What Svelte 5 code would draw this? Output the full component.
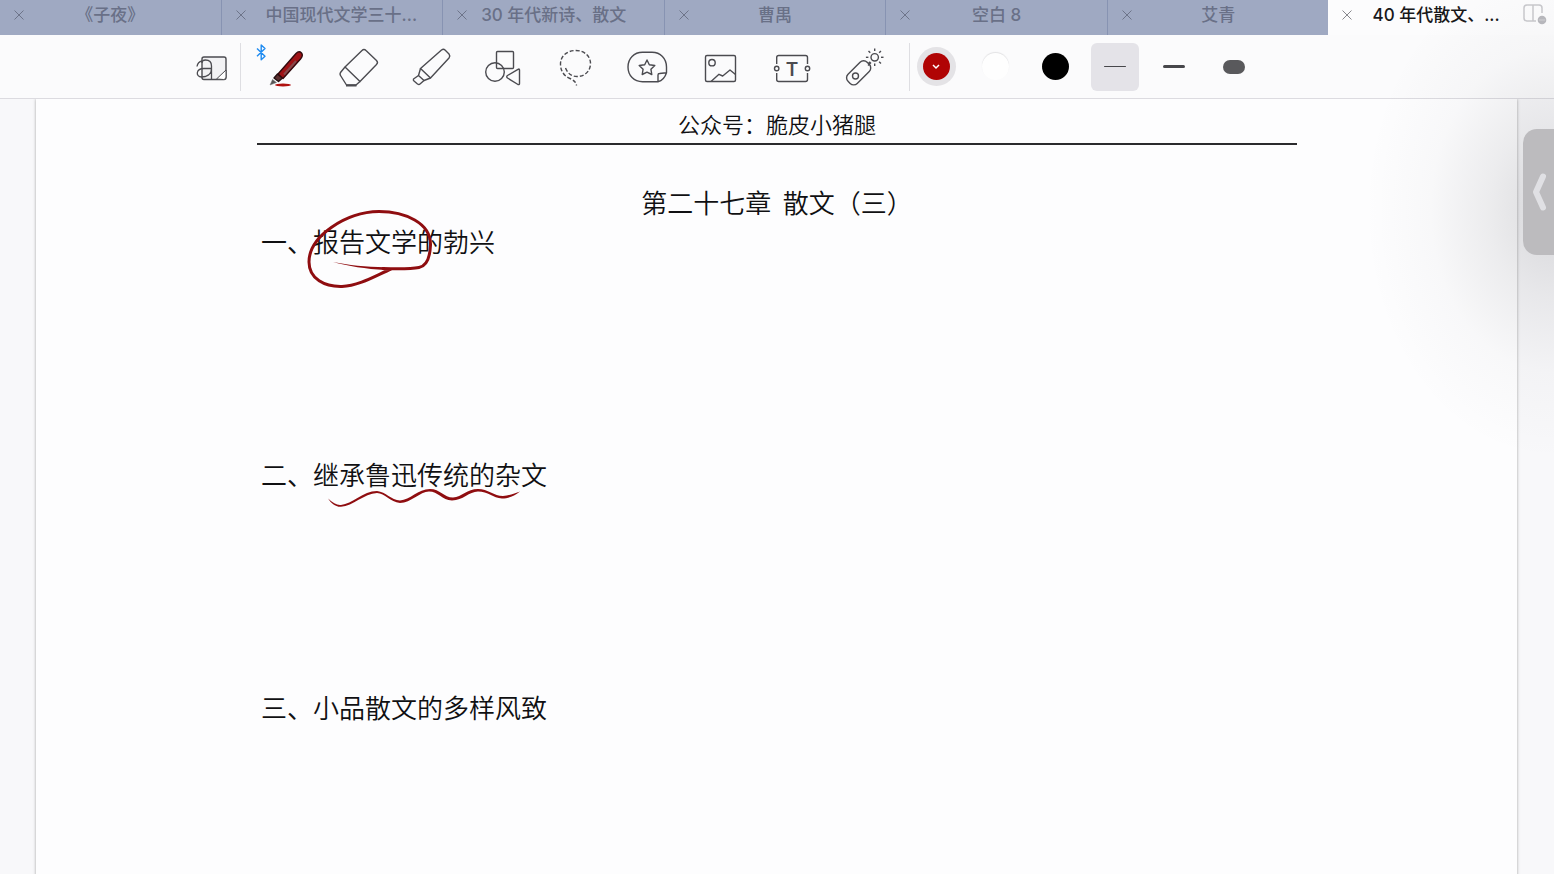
<script lang="ts">
  const tabs = [
    { title: "《子夜》" },
    { title: "中国现代文学三十...", clipped: true },
    { title: "30 年代新诗、散文" },
    { title: "曹禺" },
    { title: "空白 8" },
    { title: "艾青" },
    { title: "40 年代散文、...", clipped: true },
  ];
  let activeTab = $state(6);

  const tools = [
    "pen",
    "eraser",
    "highlighter",
    "shapes",
    "lasso",
    "sticker",
    "image",
    "text",
    "laser",
  ];
  let tool = $state("pen");

  const colors = ["red", "white", "black"];
  let color = $state("red");

  const widths = ["thin", "medium", "thick"];
  let width = $state("thin");

  const rays = [0, 45, 90, 135, 180, 225, 270, 315];

  const sections = [
    { title: "一、报告文学的勃兴", ink: "loop" },
    { title: "二、继承鲁迅传统的杂文", ink: "wave" },
    { title: "三、小品散文的多样风致", ink: "" },
  ];
</script>

<div class="app">
  <nav class="tabs">
    {#each tabs as tab, i}
      <div class="tab" class:active={i === activeTab}>
        <button class="close" type="button" aria-label="关闭">
          <svg width="10" height="10" viewBox="0 0 10 10">
            <path d="M.5 .5 9.5 9.5M9.5 .5 .5 9.5" />
          </svg>
        </button>
        <button
          class="title"
          class:clipped={tab.clipped}
          type="button"
          onclick={() => (activeTab = i)}
        >
          {tab.title}
        </button>
        {#if i === tabs.length - 1}
          <button class="split" type="button" aria-label="分屏">
            <svg width="24" height="20" viewBox="0 0 24 20">
              <path d="M13 16H4Q1 16 1 13V3Q1 0 4 0H16Q19 0 19 3V8M10 0V16" />
              <circle cx="19" cy="15" r="4.300" />
              <path class="dots" d="M16.500 15h5" />
            </svg>
          </button>
        {/if}
      </div>
    {/each}
  </nav>

  <div class="toolbar">
    <button class="tool first" type="button" aria-label="手写模式">
      <svg class="icon" viewBox="0 0 48 48">
        <rect x="14" y="14" width="24" height="22.500" rx="2" fill="#f2f2f4" />
        <path d="M28.500 36 38 27V34Q38 36.500 35.500 36.500Z" fill="#fff" stroke-width="1" />
        <path
          d="M14 20C14 17.500 15.500 17 17.500 17C21.500 17 23.500 19 23.500 23V36.500M23.500 25.500H16C7.500 25.500 7.500 34 13.500 34C18 34 23.500 32 23.500 25.500M9 23.500C9.500 20.500 11 18.500 14 18"
          stroke-width="1.300"
        />
      </svg>
    </button>
    <span class="divider"></span>

    <div class="tools">
      {#each tools as name}
        <button
          class="tool"
          type="button"
          aria-label={name}
          aria-pressed={tool === name}
          onclick={() => (tool = name)}
        >
          <svg class="icon" viewBox="0 0 48 48">
            {#if name === "pen"}
              <path d="M-5 5.500 3 13.300-.8 16.800V2L3 5.500-5 13.300" stroke="#1f8bf0" />
              <ellipse cx="21" cy="42" rx="8" ry="1.500" fill="#b01210" stroke="none" />
              <path d="M8 42 10.500 36.500 14.500 39.500Z" fill="#555" stroke="#777" stroke-width=".5" />
              <path d="M12 35 15.500 31 20.500 35 16.500 38.500Z" fill="#5c3030" stroke="#241012" />
              <path
                d="M16 31 34 10.500Q37 7.500 39.500 10Q41.500 12.500 38.500 16L21 35.500Z"
                fill="#9f1216"
                stroke="#30090c"
              />
              <path d="M22 31.500 34 18" stroke="#854a4c" stroke-width="2" />
            {:else if name === "eraser"}
              <path
                d="M11 24 28 7.500Q30 5.500 32 7.500L42.500 17.500Q44.500 19.500 42.500 21.500L26 38.500Z"
              />
              <path d="M11 24 6.500 29.500Q5.500 31 6.500 32.500L12.500 42H22L26 38.500" />
              <path d="M12 42.500H22.500" stroke-width="2" />
            {:else if name === "highlighter"}
              <path d="M13.500 25.500 34.500 7Q36.500 5.500 38 7L42 11Q43.500 13 42 15L23.500 35Z" />
              <path d="M13.500 25.500 11.500 32.500 17 37.500 23.500 35" />
              <path d="M11.500 32.500 6.500 36Q6 37 7 38L10.500 41Q12 42 13 41L17 37.500" />
            {:else if name === "shapes"}
              <rect x="17.500" y="8.500" width="17" height="17" rx="1" />
              <circle cx="16" cy="29" r="9.300" />
              <path d="M28.500 32.500 39 26.300Q40.500 25.500 40.500 27V40.500Q40.500 42 39 41.500L28.500 35Q27 33.700 28.500 32.500Z" />
            {:else if name === "lasso"}
              <path
                d="M14.500 25C17 31 21 33.500 26 33.500C34 33.500 39.500 28 39.500 20.500C39.500 13 33 7.500 25 7.500C16 7.500 9.500 13 9.500 21C9.500 28 13 33 19 35.500C23 37.500 25 39 25.500 42.500"
                stroke-dasharray="4 2"
              />
            {:else if name === "sticker"}
              <path
                d="M35 38.700H19.500C11 38.700 5 32.500 5 24C5 15.500 11 9.300 19.500 9.300H29C37.500 9.300 43.500 15.500 43.500 24V29.700C42 34.500 39.500 37.500 35 38.700V32Q35 30.500 36.500 30.500L43.500 29.700"
              />
              <path
                d="M24 17 26.300 21.700 31.800 22.500 27.900 26.200 28.800 31.500 24 29.100 19.200 31.500 20.100 26.200 16.200 22.500 21.700 21.700Z"
              />
            {:else if name === "image"}
              <rect x="9.500" y="12.500" width="30" height="26" rx="1.500" />
              <circle cx="16" cy="19.700" r="3.200" />
              <path d="M15 38.500 23 31.300 26.700 33 34 27 39.500 31.500" />
            {:else if name === "text"}
              <path
                d="M8.700 21V14.500Q8.700 12.500 10.700 12.500H37.500Q39.500 12.500 39.500 14.500V21M39.500 30V36.500Q39.500 38.500 37.500 38.500H10.700Q8.700 38.500 8.700 36.500V30"
              />
              <circle cx="8.700" cy="25.500" r="2.200" />
              <circle cx="39.500" cy="25.500" r="2.200" />
              <text x="24" y="33" text-anchor="middle">T</text>
            {:else}
              <rect
                x="5"
                y="23"
                width="27"
                height="13"
                rx="5"
                transform="rotate(-45 19 29.500)"
              />
              <circle cx="15.500" cy="33" r="3" />
              <path d="M28 22.500 31 19.500" />
              <circle cx="34.700" cy="14.300" r="3.700" />
              {#each rays as angle}
                <path d="M34.700 8V5.500" transform={`rotate(${angle} 34.7 14.3)`} />
              {/each}
            {/if}
          </svg>
        </button>
      {/each}
    </div>

    <span class="divider second"></span>

    <div class="options">
      {#each colors as name}
        <button
          class="option"
          type="button"
          aria-label={name}
          aria-pressed={color === name}
          onclick={() => (color = name)}
        >
          <span class="swatch {name}" class:selected={color === name}>
            {#if color === name}
              <svg width="8" height="6" viewBox="0 0 8 6"><path d="M1 1 4 4 7 1" /></svg>
            {/if}
          </span>
        </button>
      {/each}
      {#each widths as name}
        <button
          class="option"
          class:picked={width === name}
          type="button"
          aria-label={name}
          aria-pressed={width === name}
          onclick={() => (width = name)}
        >
          <span class="line {name}"></span>
        </button>
      {/each}
    </div>
  </div>

  <main class="desk">
    <article class="paper">
      <header>公众号：脆皮小猪腿</header>
      <h1>第二十七章&nbsp; 散文（三）</h1>
      {#each sections as section}
        <section>
          <h2>{section.title}</h2>
          {#if section.ink === "loop"}
            <svg class="ink loop" width="140" height="100" viewBox="300 200 140 100">
              <path
                class="stroke"
                d="M383 268.500C400 269 411 269 419 267.500C427 266 430 257 430.500 245C431 223 405 211.500 379 211.500C346 212 309 236 309 262C309 279 325 287 342 286.500C359 286 377 275 391 269"
              />
              <path d="M333 262C348 265 366 267 385 267.200V270C366 269 348 266 333 262Z" />
            </svg>
          {:else if section.ink === "wave"}
            <svg class="ink wave" width="200" height="30" viewBox="325 483 200 30">
              <path
                d="M328 498.500C333 503 337 505.500 341 505C352 504 363 491 377 491C386 492 391 500 400 500.500C410 500 418 489 430 489C440 489 444 497.500 453 497.500C462 497 467 489 478 489C488 489 494 496 503 496C510 495.500 515 493 520 491.500C514 496 509 498.500 502 498.500C493 498 488 491.500 478 491.500C469 491.500 463 500.500 452 500.500C442 500 438 491.500 429 491.500C420 491.500 411 503 400 503C390 502 385 493 377 493C364 493.500 353 506 341 506.800C335 507 331 503 328 498.500Z"
              />
            </svg>
          {/if}
        </section>
      {/each}
    </article>
  </main>

  <div class="shade"></div>
  <button class="handle" type="button" aria-label="展开侧栏">
    <svg width="16" height="40" viewBox="0 0 16 40">
      <path d="M12 4.500 5 20 12 35.500" />
    </svg>
  </button>
</div>

<style>
  :global(body) {
    margin: 0;
  }

  .app {
    position: relative;
    display: flex;
    flex-direction: column;
    height: 100vh;
    overflow: hidden;
    background: #f8f8fa;
    font-family: "Inter", "Noto Sans CJK SC", sans-serif;
  }

  button {
    padding: 0;
    border: 0;
    background: none;
    font: inherit;
    color: inherit;
    cursor: pointer;
  }

  svg {
    display: block;
    fill: none;
  }

  .tabs {
    display: flex;
    height: 35px;
    flex: none;
  }

  .tab {
    flex: 221 1 0;
    min-width: 0;
    box-sizing: border-box;
    display: grid;
    grid-template-columns: 38px minmax(0, 1fr) 38px;
    align-items: center;
    padding-bottom: 5px;
    border-right: 1px solid #8793b2;
    background: #9fa9c2;
    color: #697087;
  }

  .tab:nth-last-child(2) {
    border-right: 0;
  }

  .tab:last-child {
    flex-grow: 226;
    padding-bottom: 7px;
    border-right: 0;
  }

  .tab.active {
    background: #fcfcfd;
    color: #18181a;
  }

  .close {
    display: flex;
    justify-content: center;
    height: 30px;
    align-items: center;
  }

  .close svg {
    stroke: #6d7489;
  }

  .active .close svg {
    stroke: #88888d;
  }

  .title {
    font-size: 17px;
    font-weight: 500;
    line-height: 30px;
    white-space: nowrap;
  }

  .title.clipped {
    padding-left: 6px;
    text-align: left;
  }

  .split {
    display: flex;
    justify-content: center;
  }

  .split svg {
    overflow: visible;
    stroke: #c9c9cd;
    stroke-width: 1.5;
  }

  .split circle {
    fill: #b9b9be;
    stroke: none;
  }

  .split .dots {
    stroke: #eeeeef;
    stroke-width: 1;
    stroke-dasharray: 1 1;
  }

  .toolbar {
    position: relative;
    z-index: 1;
    display: flex;
    align-items: center;
    flex: none;
    height: 63px;
    padding-left: 188px;
    border-bottom: 1px solid #dcdbe0;
    background: #fbfbfc;
  }

  .tool {
    width: 48px;
    height: 48px;
  }

  .icon {
    width: 48px;
    height: 48px;
    overflow: visible;
    stroke: #4b4b50;
    stroke-width: 1.4;
    stroke-linejoin: round;
  }

  .icon text {
    fill: #4b4b50;
    stroke: none;
    font-family: "Inter", sans-serif;
    font-size: 19px;
    font-weight: 600;
  }

  .divider {
    width: 1px;
    height: 48px;
    margin: 0 21px 0 4px;
    background: #dedee2;
  }

  .divider.second {
    margin: 0 2px 0 21px;
  }

  .tools {
    display: flex;
    justify-content: space-between;
    flex: 0 1 626px;
  }

  .options {
    display: flex;
    justify-content: space-between;
    flex: 0 1 346px;
  }

  .option {
    display: flex;
    align-items: center;
    justify-content: center;
    width: 48px;
    height: 48px;
    border-radius: 6px;
  }

  .option.picked {
    background: #e4e3e8;
  }

  .swatch {
    display: flex;
    align-items: center;
    justify-content: center;
    width: 27px;
    height: 27px;
    border-radius: 50%;
  }

  .swatch.selected {
    box-shadow: 0 0 0 6px #e4e3e6;
  }

  .swatch svg {
    stroke: #fff;
    stroke-width: 1.5;
  }

  .red {
    background: #b00404;
  }

  .white {
    background: #fefefe;
    box-shadow: 0 -1px 1px #e2e2e4;
  }

  .black {
    background: #000;
  }

  .line {
    width: 22px;
    border-radius: 7px;
    background: #47474b;
  }

  .thin {
    height: 1px;
  }

  .medium {
    height: 3px;
  }

  .thick {
    height: 14px;
    background: #59595c;
  }

  .desk {
    flex: 1;
    display: flex;
    padding: 0 37px 0 36px;
  }

  .paper {
    flex: 1;
    padding: 7px 220px 0 221px;
    background: #fdfdfe;
    box-shadow: 0 0 3px rgba(0, 0, 0, 0.35);
    font-family: "Noto Sans CJK SC", sans-serif;
    font-weight: 350;
    color: #101012;
  }

  header {
    padding-bottom: 2px;
    border-bottom: 2px solid #2b2b2d;
    font-size: 22px;
    line-height: 35px;
    text-align: center;
  }

  h1,
  h2 {
    margin: 0;
    font-size: 26px;
    font-weight: 350;
    line-height: 39px;
  }

  h1 {
    margin-top: 37px;
    text-align: center;
  }

  section {
    position: relative;
    height: 233px;
    padding-left: 4px;
  }

  .ink {
    position: absolute;
    fill: #8f0d10;
  }

  .ink .stroke {
    fill: none;
    stroke: #8f0d10;
    stroke-width: 3;
    stroke-linecap: round;
  }

  .loop {
    left: 43px;
    top: -21px;
  }

  .wave {
    left: 68px;
    top: 29px;
  }

  .shade {
    position: absolute;
    z-index: 2;
    top: 0;
    right: 0;
    width: 200px;
    height: 480px;
    background: radial-gradient(
      ellipse 190px 250px at 100% 210px,
      rgba(40, 40, 50, 0.16),
      rgba(40, 40, 50, 0.08) 35%,
      rgba(40, 40, 50, 0.025) 65%,
      transparent
    );
    pointer-events: none;
  }

  .handle {
    position: absolute;
    z-index: 3;
    top: 129px;
    right: 0;
    display: flex;
    align-items: center;
    justify-content: center;
    width: 31px;
    height: 126px;
    border-radius: 14px 0 0 14px;
    background: #bcbbbe;
  }

  .handle svg {
    stroke: #e0e0e4;
    stroke-width: 6;
    stroke-linecap: round;
    stroke-linejoin: round;
  }
</style>
